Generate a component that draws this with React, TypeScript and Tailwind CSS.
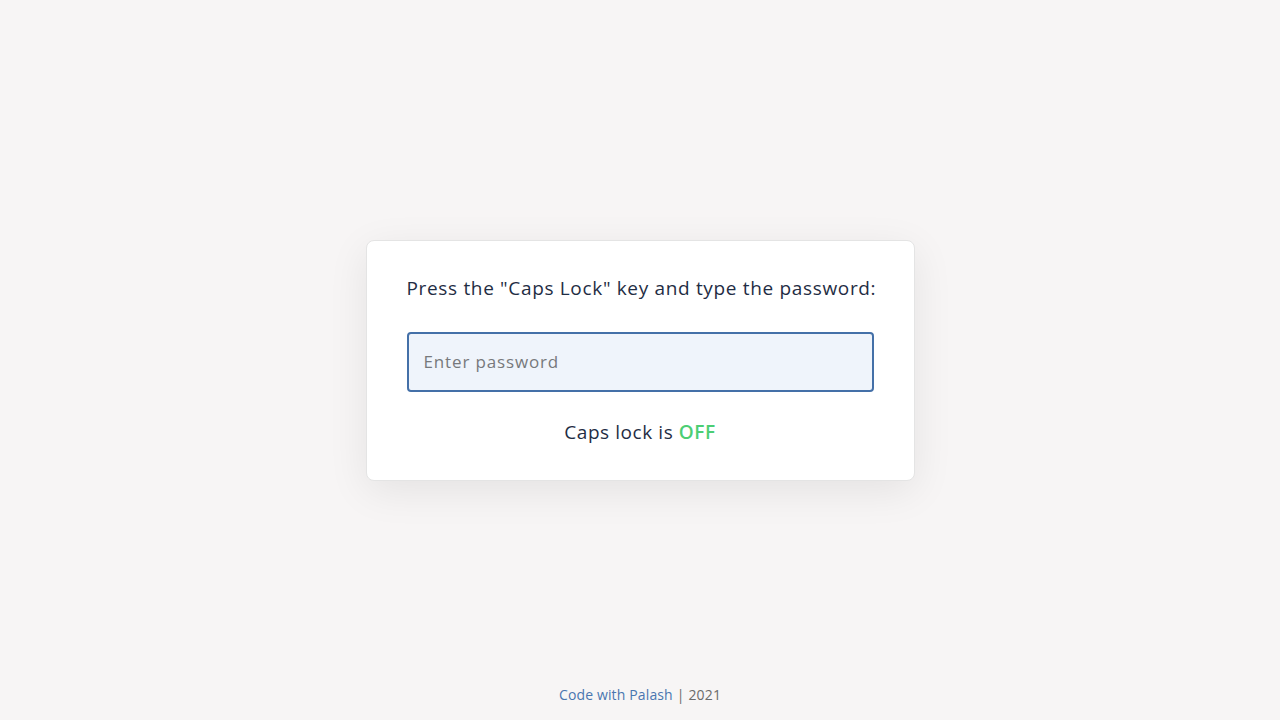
import React from "react";

export default function App() {
  return (
    <div
      className="flex h-screen w-full flex-col bg-[#f7f5f5]"
      style={{ fontFamily: '"Open Sans", "Noto Sans", sans-serif' }}
    >
      <div className="h-[52px] shrink-0" />
      <main className="flex flex-1 items-center justify-center">
        <div className="w-[549px] rounded-lg border border-[#e4e4e4] bg-white px-[40px] pt-[35px] pb-[36px] shadow-[0_10px_40px_rgba(0,0,0,0.08)]">
          <p className="whitespace-nowrap text-center text-[19px] leading-[24px] tracking-[0.035em] text-[#1f2d44]">
            Press the "Caps Lock" key and type the password:
          </p>
          <input
            type="password"
            placeholder="Enter password"
            className="mt-[32px] block h-[60px] w-full rounded-[4px] border-2 border-[#4470a8] bg-[#eff4fb] px-[15px] text-[17px] tracking-[0.05em] text-[#1f2d44] outline-none placeholder:text-[#77797c]"
          />
          <p className="mt-[28px] text-center text-[19px] leading-[24px] tracking-[0.03em] text-[#1f2d44]">
            Caps lock is <span className="font-semibold text-[#4cce74]">OFF</span>
          </p>
        </div>
      </main>
      <footer className="flex h-[52px] shrink-0 items-center justify-center text-[14px] tracking-[0.01em] text-[#6b6b6b]">
        <span className="text-[#4a76b0]">Code with Palash</span>
        <span className="ml-[4px]">| 2021</span>
      </footer>
    </div>
  );
}
